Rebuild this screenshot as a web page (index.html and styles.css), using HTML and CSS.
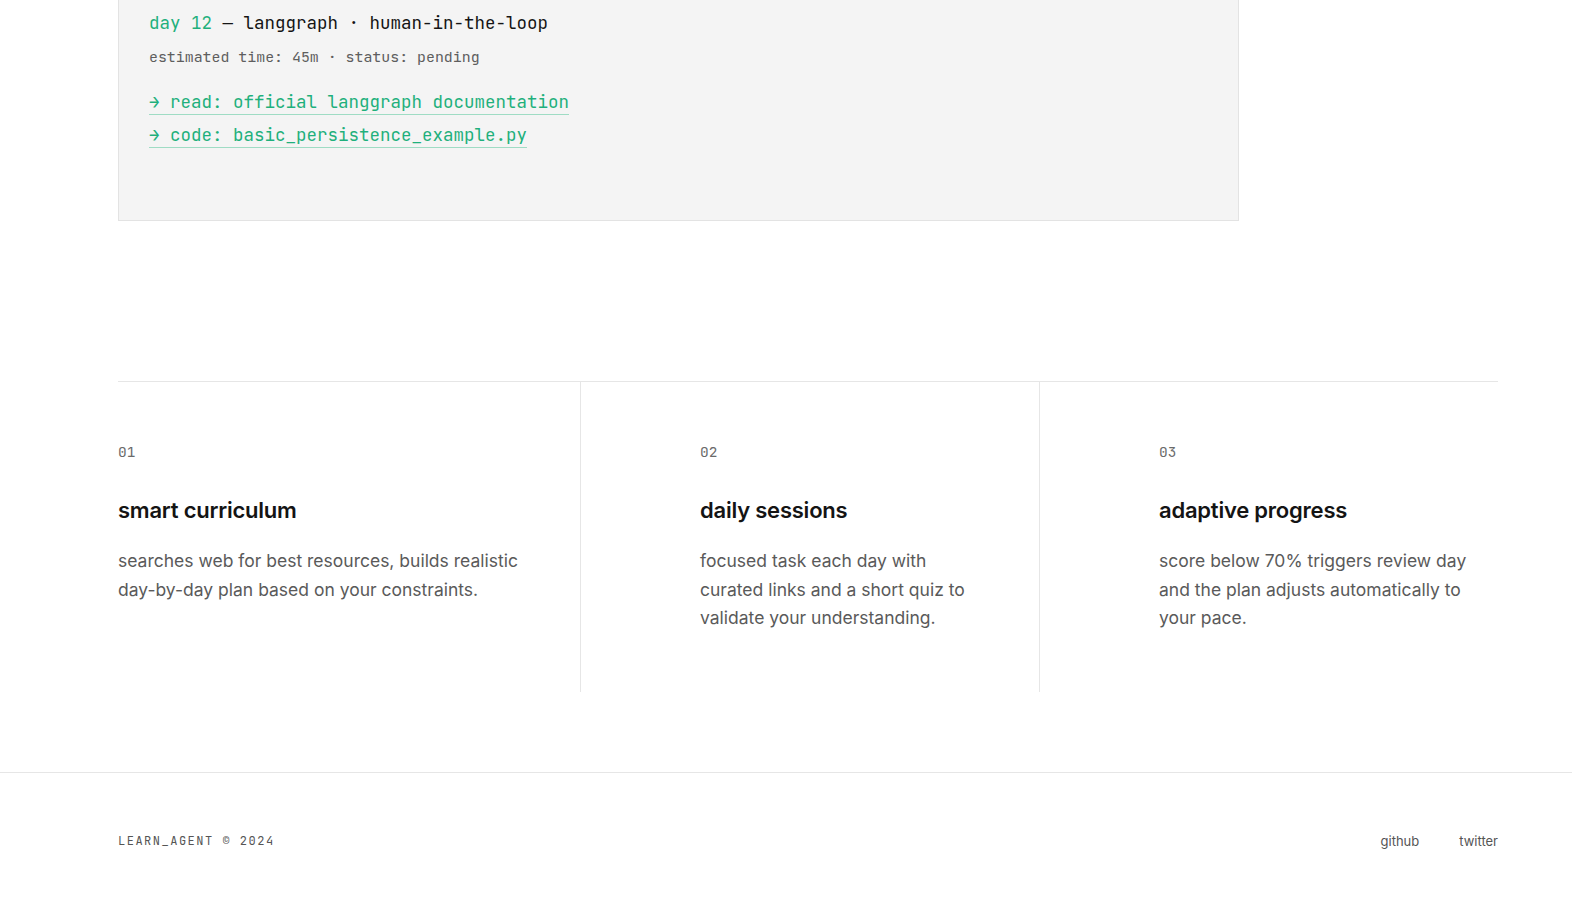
FILE: index.html
```html
<!DOCTYPE html>
<html lang="en">
<head>
<meta charset="utf-8">
<title>learn_agent</title>
<link rel="stylesheet" href="styles.css">
</head>
<body>
<main class="wrap">
  <section class="preview">
    <div class="card">
      <div class="card-title"><span class="accent">day 12</span> — langgraph · human-in-the-loop</div>
      <div class="card-meta">estimated time: 45m · status: pending</div>
      <ul class="card-links">
        <li><a href="#">→ read: official langgraph documentation</a></li>
        <li><a href="#">→ code: basic_persistence_example.py</a></li>
      </ul>
    </div>
  </section>

  <section class="features">
    <div class="feature">
      <div class="num">01</div>
      <h3>smart curriculum</h3>
      <p>searches web for best resources, builds realistic day-by-day plan based on your constraints.</p>
    </div>
    <div class="feature">
      <div class="num">02</div>
      <h3>daily sessions</h3>
      <p>focused task each day with curated links and a short quiz to validate your understanding.</p>
    </div>
    <div class="feature">
      <div class="num">03</div>
      <h3>adaptive progress</h3>
      <p>score below 70% triggers review day and the plan adjusts automatically to your pace.</p>
    </div>
  </section>
</main>

<footer class="footer">
  <div class="footer-inner">
    <span class="brand">LEARN_AGENT © 2024</span>
    <nav class="footer-links">
      <a href="#">github</a>
      <a href="#">twitter</a>
    </nav>
  </div>
</footer>
</body>
</html>
```

FILE: styles.css
```css
* { box-sizing: border-box; }

html, body {
  margin: 0;
  padding: 0;
  background: #ffffff;
}

body {
  font-family: "Inter", "Noto Sans", "Liberation Sans", sans-serif;
  color: #111;
}

.wrap {
  width: 1380px;
  margin-left: 118px;
}

.preview {
  padding-bottom: 160px;
}

.card {
  width: 1121px;
  margin-top: -1px;
  background: #f4f4f4;
  border: 1px solid #e3e3e3;
  padding: 9px 30px 65px 30px;
  font-family: "JetBrains Mono", "DejaVu Sans Mono", "Liberation Mono", monospace;
}

.card-title {
  font-size: 17.5px;
  line-height: 28px;
  color: #151515;
}

.accent { color: #1fb07c; }

.card-meta {
  margin-top: 9px;
  font-size: 14.9px;
  line-height: 22px;
  color: #5e5e5e;
}

.card-links {
  list-style: none;
  margin: 21px 0 0 0;
  padding: 0;
}

.card-links li {
  height: 33px;
}

.card-links a {
  font-size: 17.5px;
  line-height: 26px;
  color: #1fb07c;
  text-decoration: none;
  border-bottom: 1px solid #9fdcc4;
  padding-bottom: 1px;
}

.features {
  display: grid;
  grid-template-columns: 462px 459px 459px;
  border-top: 1px solid #e6e6e6;
}

.feature {
  padding: 60px 60px 59px 119px;
  border-left: 1px solid #e6e6e6;
}

.feature:first-child {
  padding-left: 0;
  padding-right: 48px;
  border-left: none;
}

.feature:last-child {
  padding-right: 20px;
}

.num {
  font-family: "JetBrains Mono", "DejaVu Sans Mono", "Liberation Mono", monospace;
  font-size: 14.5px;
  line-height: 20px;
  color: #6a6a6a;
}

.feature h3 {
  margin: 33px 0 0 0;
  font-size: 22px;
  line-height: 31px;
  font-weight: 600;
  letter-spacing: -0.01em;
  color: #141414;
}

.feature p {
  margin: 21px 0 0 0;
  font-size: 17.5px;
  line-height: 28.6px;
  color: #5a5a5a;
}

.footer {
  margin-top: 80px;
  border-top: 1px solid #e6e6e6;
}

.footer-inner {
  width: 1380px;
  margin-left: 118px;
  padding: 60px 0 62px 0;
  display: flex;
  justify-content: space-between;
  align-items: center;
}

.brand {
  font-family: "JetBrains Mono", "DejaVu Sans Mono", "Liberation Mono", monospace;
  font-size: 12px;
  letter-spacing: 1.5px;
  color: #555;
}

.footer-links {
  display: flex;
  gap: 40px;
}

.footer-links a {
  font-size: 13px;
  color: #555;
  text-decoration: none;
}
```
